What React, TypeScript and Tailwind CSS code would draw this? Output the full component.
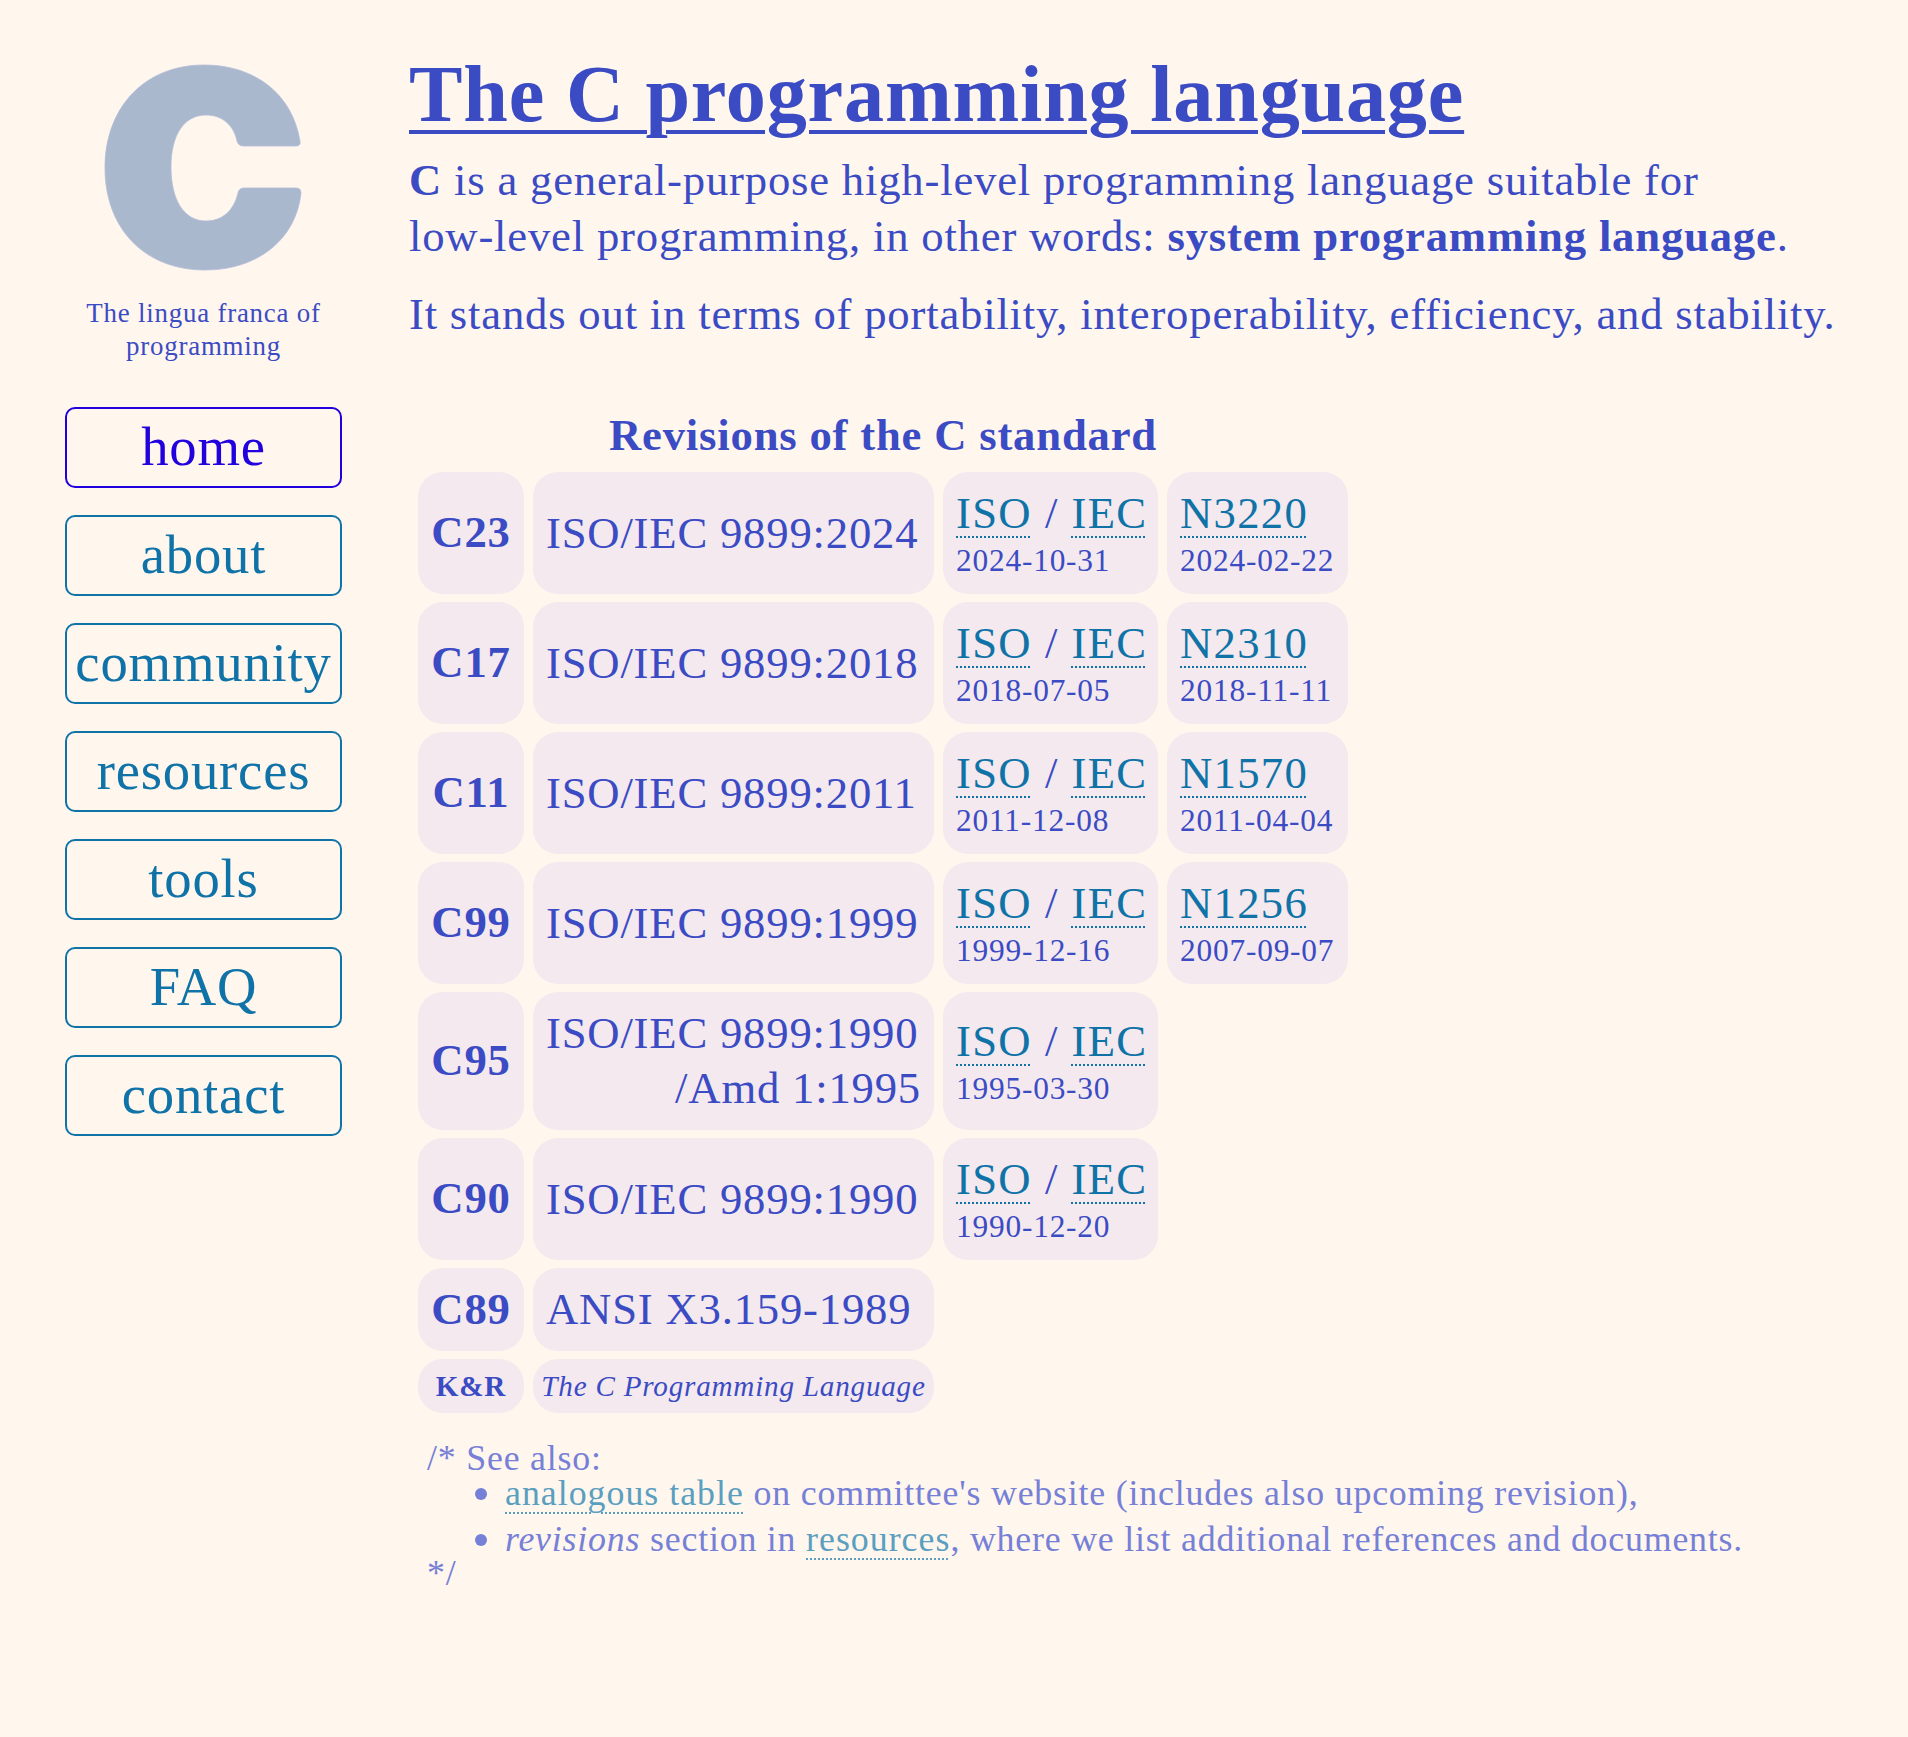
const navItems = ["home", "about", "community", "resources", "tools", "FAQ", "contact"];

type Revision = {
    name: string;
    title: string;
    amendment?: string;
    published?: string;
    draft?: string;
    draftDate?: string;
};

const revisions: Revision[] = [
    { name: "C23", title: "ISO/IEC 9899:2024", published: "2024-10-31", draft: "N3220", draftDate: "2024-02-22" },
    { name: "C17", title: "ISO/IEC 9899:2018", published: "2018-07-05", draft: "N2310", draftDate: "2018-11-11" },
    { name: "C11", title: "ISO/IEC 9899:2011", published: "2011-12-08", draft: "N1570", draftDate: "2011-04-04" },
    { name: "C99", title: "ISO/IEC 9899:1999", published: "1999-12-16", draft: "N1256", draftDate: "2007-09-07" },
    { name: "C95", title: "ISO/IEC 9899:1990", amendment: "/Amd 1:1995", published: "1995-03-30" },
    { name: "C90", title: "ISO/IEC 9899:1990", published: "1990-12-20" },
    { name: "C89", title: "ANSI X3.159-1989" },
];

const DocLink = ({ children }: { children: React.ReactNode }) => (
    <a className="tracking-[1.3px] text-[#1073a8] underline decoration-dotted decoration-2 underline-offset-[8px]">{children}</a>
);

const NoteLink = ({ children }: { children: React.ReactNode }) => (
    <a className="tracking-[1px] text-[#5a9fc0] underline decoration-dotted decoration-2 underline-offset-[7px]">{children}</a>
);

const Logo = () => (
    <svg width="204" height="211" viewBox="103 62 204 211" className="blur-[0.6px]">
        <path
            d="M301 141 C293 93 255 65 205 65 C145 65 106 108 106 168 C106 228 145 270 206 270 C258 270 297 240 302 193 Q302 188 297 188 L245 188 Q240 188 239 193 C235 210 224 221 207 221 C185 221 172 200 172 167 C172 135 185 115 207 115 C224 115 235 126 238 141 Q239 146 245 146 L297 146 Q302 146 301 141 Z"
            fill="#aab8cd"
            stroke="#b4bdd8"
            strokeWidth="0.8"
            strokeLinejoin="round"
        />
    </svg>
);

export default function App() {
    return (
        <div className="flex min-h-[1737px] bg-[#fff6ee] font-['Liberation_Serif',serif] tracking-[0.8px] text-[#3b4bc4]">
            <aside className="flex w-[407px] shrink-0 flex-col items-center pt-[62px]">
                <Logo />
                <p className="mt-[24px] w-[300px] text-center text-[26.88px] leading-[33px]">
                    The lingua franca of programming
                </p>
                <nav className="mt-[44px] flex flex-col gap-[27px]">
                    {navItems.map((item) => (
                        <a
                            key={item}
                            className={`flex h-[81px] w-[277px] items-center justify-center rounded-[10px] border-2 text-[54.7px] ${
                                item === "home"
                                    ? "border-[#2000dd] text-[#2000dd]"
                                    : "border-[#1073a8] text-[#1073a8]"
                            }`}
                        >
                            {item}
                        </a>
                    ))}
                </nav>
            </aside>

            <main className="flex-1 pl-[2px] pt-[46px]">
                <h1 className="text-[80.2px] font-bold leading-[96px] underline decoration-[4px] underline-offset-[9px]">
                    The C programming language
                </h1>
                <p className="mt-[10px] text-[44.7px] leading-[56px]">
                    <b>C</b> is a general-purpose high-level programming language suitable for
                    <br />
                    low-level programming, in other words: <b>system programming language</b>.
                </p>
                <p className="mt-[22px] text-[44.7px] leading-[56px]">
                    It stands out in terms of portability, interoperability, efficiency, and stability.
                </p>

                <table className="mt-[65px] border-separate border-spacing-x-[9px] border-spacing-y-[8px] text-[44.7px]">
                    <caption className="pb-[1px] text-[44.7px] font-bold leading-[56px]">Revisions of the C standard</caption>
                    <tbody>
                        {revisions.map((row) => (
                            <tr key={row.name}>
                                <td className="w-[106px] rounded-[25px] bg-[#f3e9ee] text-center font-bold">{row.name}</td>
                                <td className="w-[401px] rounded-[25px] bg-[#f3e9ee] px-[13px] py-[14px] leading-[55px]">
                                    <span className="block">{row.title}</span>
                                    {row.amendment && <span className="block text-right">{row.amendment}</span>}
                                </td>
                                {row.published && (
                                    <td className="w-[215px] rounded-[25px] bg-[#f3e9ee] py-[14px] pl-[13px] pr-[10px] leading-[55px] [word-spacing:1.2px]">
                                        <div className="whitespace-nowrap">
                                            <DocLink>ISO</DocLink> / <DocLink>IEC</DocLink>
                                        </div>
                                        <div className="text-[31.36px] leading-[39px]">{row.published}</div>
                                    </td>
                                )}
                                {row.draft && (
                                    <td className="w-[181px] rounded-[25px] bg-[#f3e9ee] px-[13px] py-[14px] leading-[55px]">
                                        <DocLink>{row.draft}</DocLink>
                                        <div className="text-[31.36px] leading-[39px]">{row.draftDate}</div>
                                    </td>
                                )}
                            </tr>
                        ))}
                        <tr>
                            <td className="rounded-[25px] bg-[#f3e9ee] py-[10px] text-center text-[29.12px] font-bold leading-[34px]">K&amp;R</td>
                            <td className="rounded-[25px] bg-[#f3e9ee] py-[10px] text-center text-[29.12px] italic leading-[34px]">
                                The C Programming Language
                            </td>
                        </tr>
                    </tbody>
                </table>

                <div className="mt-[21px] pl-[18px] text-[35.84px] leading-[38px] text-[#7680d6]">
                    <div className="leading-[32px]">/* See also:</div>
                    <ul className="pl-[48px]">
                        <li className="mb-[8px] flex gap-[18px]">
                            <span className="mt-[14px] h-[12px] w-[12px] shrink-0 rounded-full bg-[#7680d6]" />
                            <span>
                                <NoteLink>analogous table</NoteLink> on committee's website (includes also upcoming revision),
                            </span>
                        </li>
                        <li className="flex gap-[18px]">
                            <span className="mt-[14px] h-[12px] w-[12px] shrink-0 rounded-full bg-[#7680d6]" />
                            <span>
                                <i>revisions</i> section in <NoteLink>resources</NoteLink>, where we list additional references and documents.
                            </span>
                        </li>
                    </ul>
                    <div className="leading-[30px]">*/</div>
                </div>
            </main>
        </div>
    );
}
